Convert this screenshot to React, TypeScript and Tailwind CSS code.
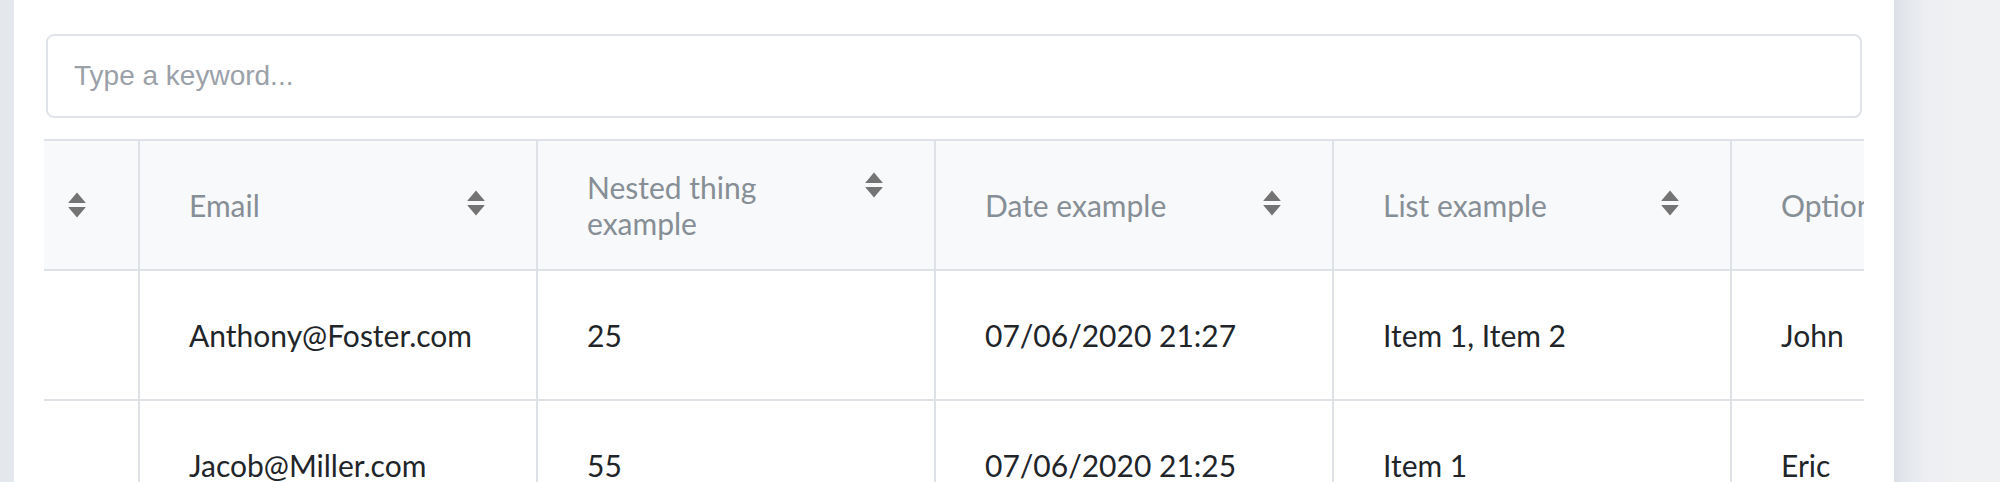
import React from "react";

const SortIcon = () => (
  <svg width="18" height="26" viewBox="0 0 18 26" className="shrink-0">
    <path d="M9 0.5 L17.5 10.5 Q18 11 17 11 L1 11 Q0 11 0.5 10.5 Z" fill="#747474" />
    <path d="M1 15 L17 15 Q18 15 17.5 15.5 L9 25.5 L0.5 15.5 Q0 15 1 15 Z" fill="#747474" />
  </svg>
);

const headers = [
  "Email",
  "Nested thing example",
  "Date example",
  "List example",
  "Options example",
];

const rows = [
  ["Anthony@Foster.com", "25", "07/06/2020 21:27", "Item 1, Item 2", "John"],
  ["Jacob@Miller.com", "55", "07/06/2020 21:25", "Item 1", "Eric"],
];

export default function App() {
  return (
    <div className="flex h-[482px] w-[2000px] overflow-hidden bg-white">
      <div className="w-[14px] shrink-0 bg-[#e4e7eb]" />
      <div className="w-[1880px] shrink-0 bg-white pt-[34px] pl-[32px]">
        <input
          type="text"
          placeholder="Type a keyword..."
          className="block h-[84px] w-[1816px] rounded-[8px] border-2 border-[#e0e4e9] bg-white px-[26px] text-[28px] font-['Liberation_Sans',Arial,sans-serif] text-[#212529] outline-none placeholder:text-[#9ba1a9]"
        />
        <div className="mt-[21px] -ml-[2px] w-[1820px] overflow-hidden border-t-2 border-[#dee2e6] font-['Lato',sans-serif] text-[30px] leading-[36px]">
          <div className="flex h-[130px] w-max border-b-2 border-[#dee2e6] bg-[#f8f9fa] text-[#868e96]">
            <div className="flex w-[96px] shrink-0 items-center border-r-2 border-[#dee2e6] pl-[24px]">
              <SortIcon />
            </div>
            {headers.map((h) => (
              <div
                key={h}
                className="flex w-[398px] shrink-0 items-center border-r-2 border-[#dee2e6] pl-[49px] pr-[51px]"
              >
                <div className="flex w-full items-start justify-between">
                  <span className="max-w-[250px]">{h}</span>
                  <span className="mt-[3px]">
                    <SortIcon />
                  </span>
                </div>
              </div>
            ))}
          </div>
          {rows.map((r, i) => (
            <div key={i} className="flex h-[130px] w-max border-b-2 border-[#dee2e6] text-[#212529]">
              <div className="w-[96px] shrink-0 border-r-2 border-[#dee2e6]" />
              {r.map((c, j) => (
                <div
                  key={j}
                  className="flex w-[398px] shrink-0 items-center border-r-2 border-[#dee2e6] pl-[49px]"
                >
                  {c}
                </div>
              ))}
            </div>
          ))}
        </div>
      </div>
      <div className="w-[106px] shrink-0 bg-[linear-gradient(to_right,#dde1e7,#eceef1_30px,#f0f1f3_60px)]" />
    </div>
  );
}
